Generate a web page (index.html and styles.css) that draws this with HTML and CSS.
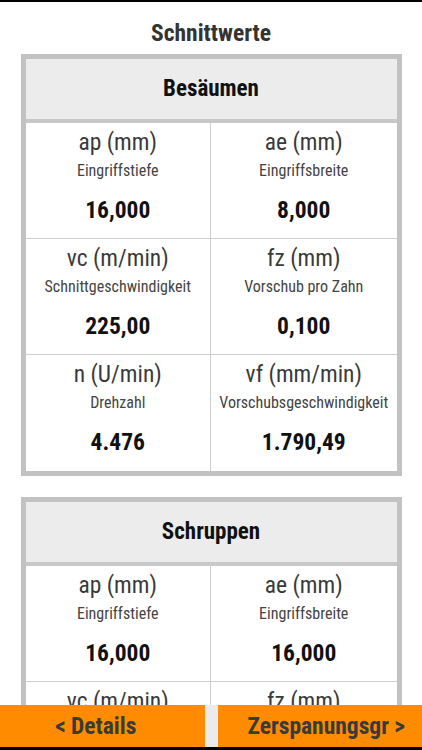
FILE: index.html
```html
<!DOCTYPE html>
<html lang="de">
<head>
<meta charset="utf-8">
<title>Schnittwerte</title>
<link rel="stylesheet" href="styles.css">
</head>
<body>
<main class="screen">
  <h1 class="title">Schnittwerte</h1>

  <section class="card">
    <div class="card-head">Besäumen</div>
    <div class="grid">
      <div class="cell"><div class="lbl">ap (mm)</div><div class="sub">Eingriffstiefe</div><div class="val">16,000</div></div>
      <div class="cell"><div class="lbl">ae (mm)</div><div class="sub">Eingriffsbreite</div><div class="val">8,000</div></div>
      <div class="cell"><div class="lbl">vc (m/min)</div><div class="sub">Schnittgeschwindigkeit</div><div class="val">225,00</div></div>
      <div class="cell"><div class="lbl">fz (mm)</div><div class="sub">Vorschub pro Zahn</div><div class="val">0,100</div></div>
      <div class="cell"><div class="lbl">n (U/min)</div><div class="sub">Drehzahl</div><div class="val">4.476</div></div>
      <div class="cell"><div class="lbl">vf (mm/min)</div><div class="sub">Vorschubsgeschwindigkeit</div><div class="val">1.790,49</div></div>
    </div>
  </section>

  <section class="card">
    <div class="card-head">Schruppen</div>
    <div class="grid">
      <div class="cell"><div class="lbl">ap (mm)</div><div class="sub">Eingriffstiefe</div><div class="val">16,000</div></div>
      <div class="cell"><div class="lbl">ae (mm)</div><div class="sub">Eingriffsbreite</div><div class="val">16,000</div></div>
      <div class="cell"><div class="lbl">vc (m/min)</div><div class="sub">Schnittgeschwindigkeit</div><div class="val">225,00</div></div>
      <div class="cell"><div class="lbl">fz (mm)</div><div class="sub">Vorschub pro Zahn</div><div class="val">0,100</div></div>
    </div>
  </section>
</main>

<nav class="bottom-bar">
  <div class="btn btn-left">&lt; Details</div>
  <div class="btn btn-right">Zerspanungsgr &gt;</div>
</nav>
</body>
</html>
```

FILE: styles.css
```css
html, body {
  margin: 0;
  padding: 0;
  height: 100%;
  overflow: hidden;
  background: #ffffff;
}

body {
  font-family: "Roboto Condensed", Roboto, "Liberation Sans", sans-serif;
  font-stretch: condensed;
  border-top: 2px solid #000;
  box-sizing: border-box;
  display: flex;
  flex-direction: column;
}

.screen {
  flex: 1;
  min-height: 0;
  overflow: hidden;
  display: flex;
  flex-direction: column;
  align-items: center;
}

.title {
  margin: 0;
  padding-top: 19px;
  height: 33px;
  line-height: 24px;
  font-size: 23.5px;
  font-weight: 700;
  color: #333333;
  flex-shrink: 0;
}

.card {
  width: 371px;
  border: 5px solid #c2c2c2;
  margin-bottom: 21px;
  background: #fff;
  flex-shrink: 0;
}

.card-head {
  height: 60px;
  line-height: 60px;
  text-align: center;
  background: #ececec;
  border-bottom: 4px solid #c8c8c8;
  font-size: 23px;
  font-weight: 700;
  color: #111;
}

.grid {
  display: grid;
  grid-template-columns: 1fr 1fr;
}

.cell {
  height: 116px;
  box-sizing: border-box;
  padding-top: 5px;
  text-align: center;
  border-bottom: 1px solid #cfcfcf;
}

.cell:nth-child(odd) {
  border-right: 1px solid #cfcfcf;
}

.cell:nth-last-child(-n+2) {
  border-bottom: none;
}

.lbl {
  font-size: 23.5px;
  line-height: 28px;
  color: #3a3a3a;
}

.sub {
  font-size: 16px;
  line-height: 30px;
  color: #444;
}

.val {
  margin-top: 9px;
  font-size: 23.5px;
  line-height: 30px;
  font-weight: 700;
  color: #111;
}

.bottom-bar {
  flex-shrink: 0;
  height: 42px;
  background: #ebebeb;
  border-bottom: 3px solid #000;
  display: flex;
  gap: 13px;
}

.btn {
  flex: 1;
  background: #ff8c00;
  color: #3a3a3a;
  font-size: 23.5px;
  font-weight: 700;
  display: flex;
  align-items: center;
  justify-content: center;
  white-space: nowrap;
  overflow: hidden;
}

.btn-left {
  padding-right: 13px;
}

.btn-right {
  padding-left: 13px;
}
```
